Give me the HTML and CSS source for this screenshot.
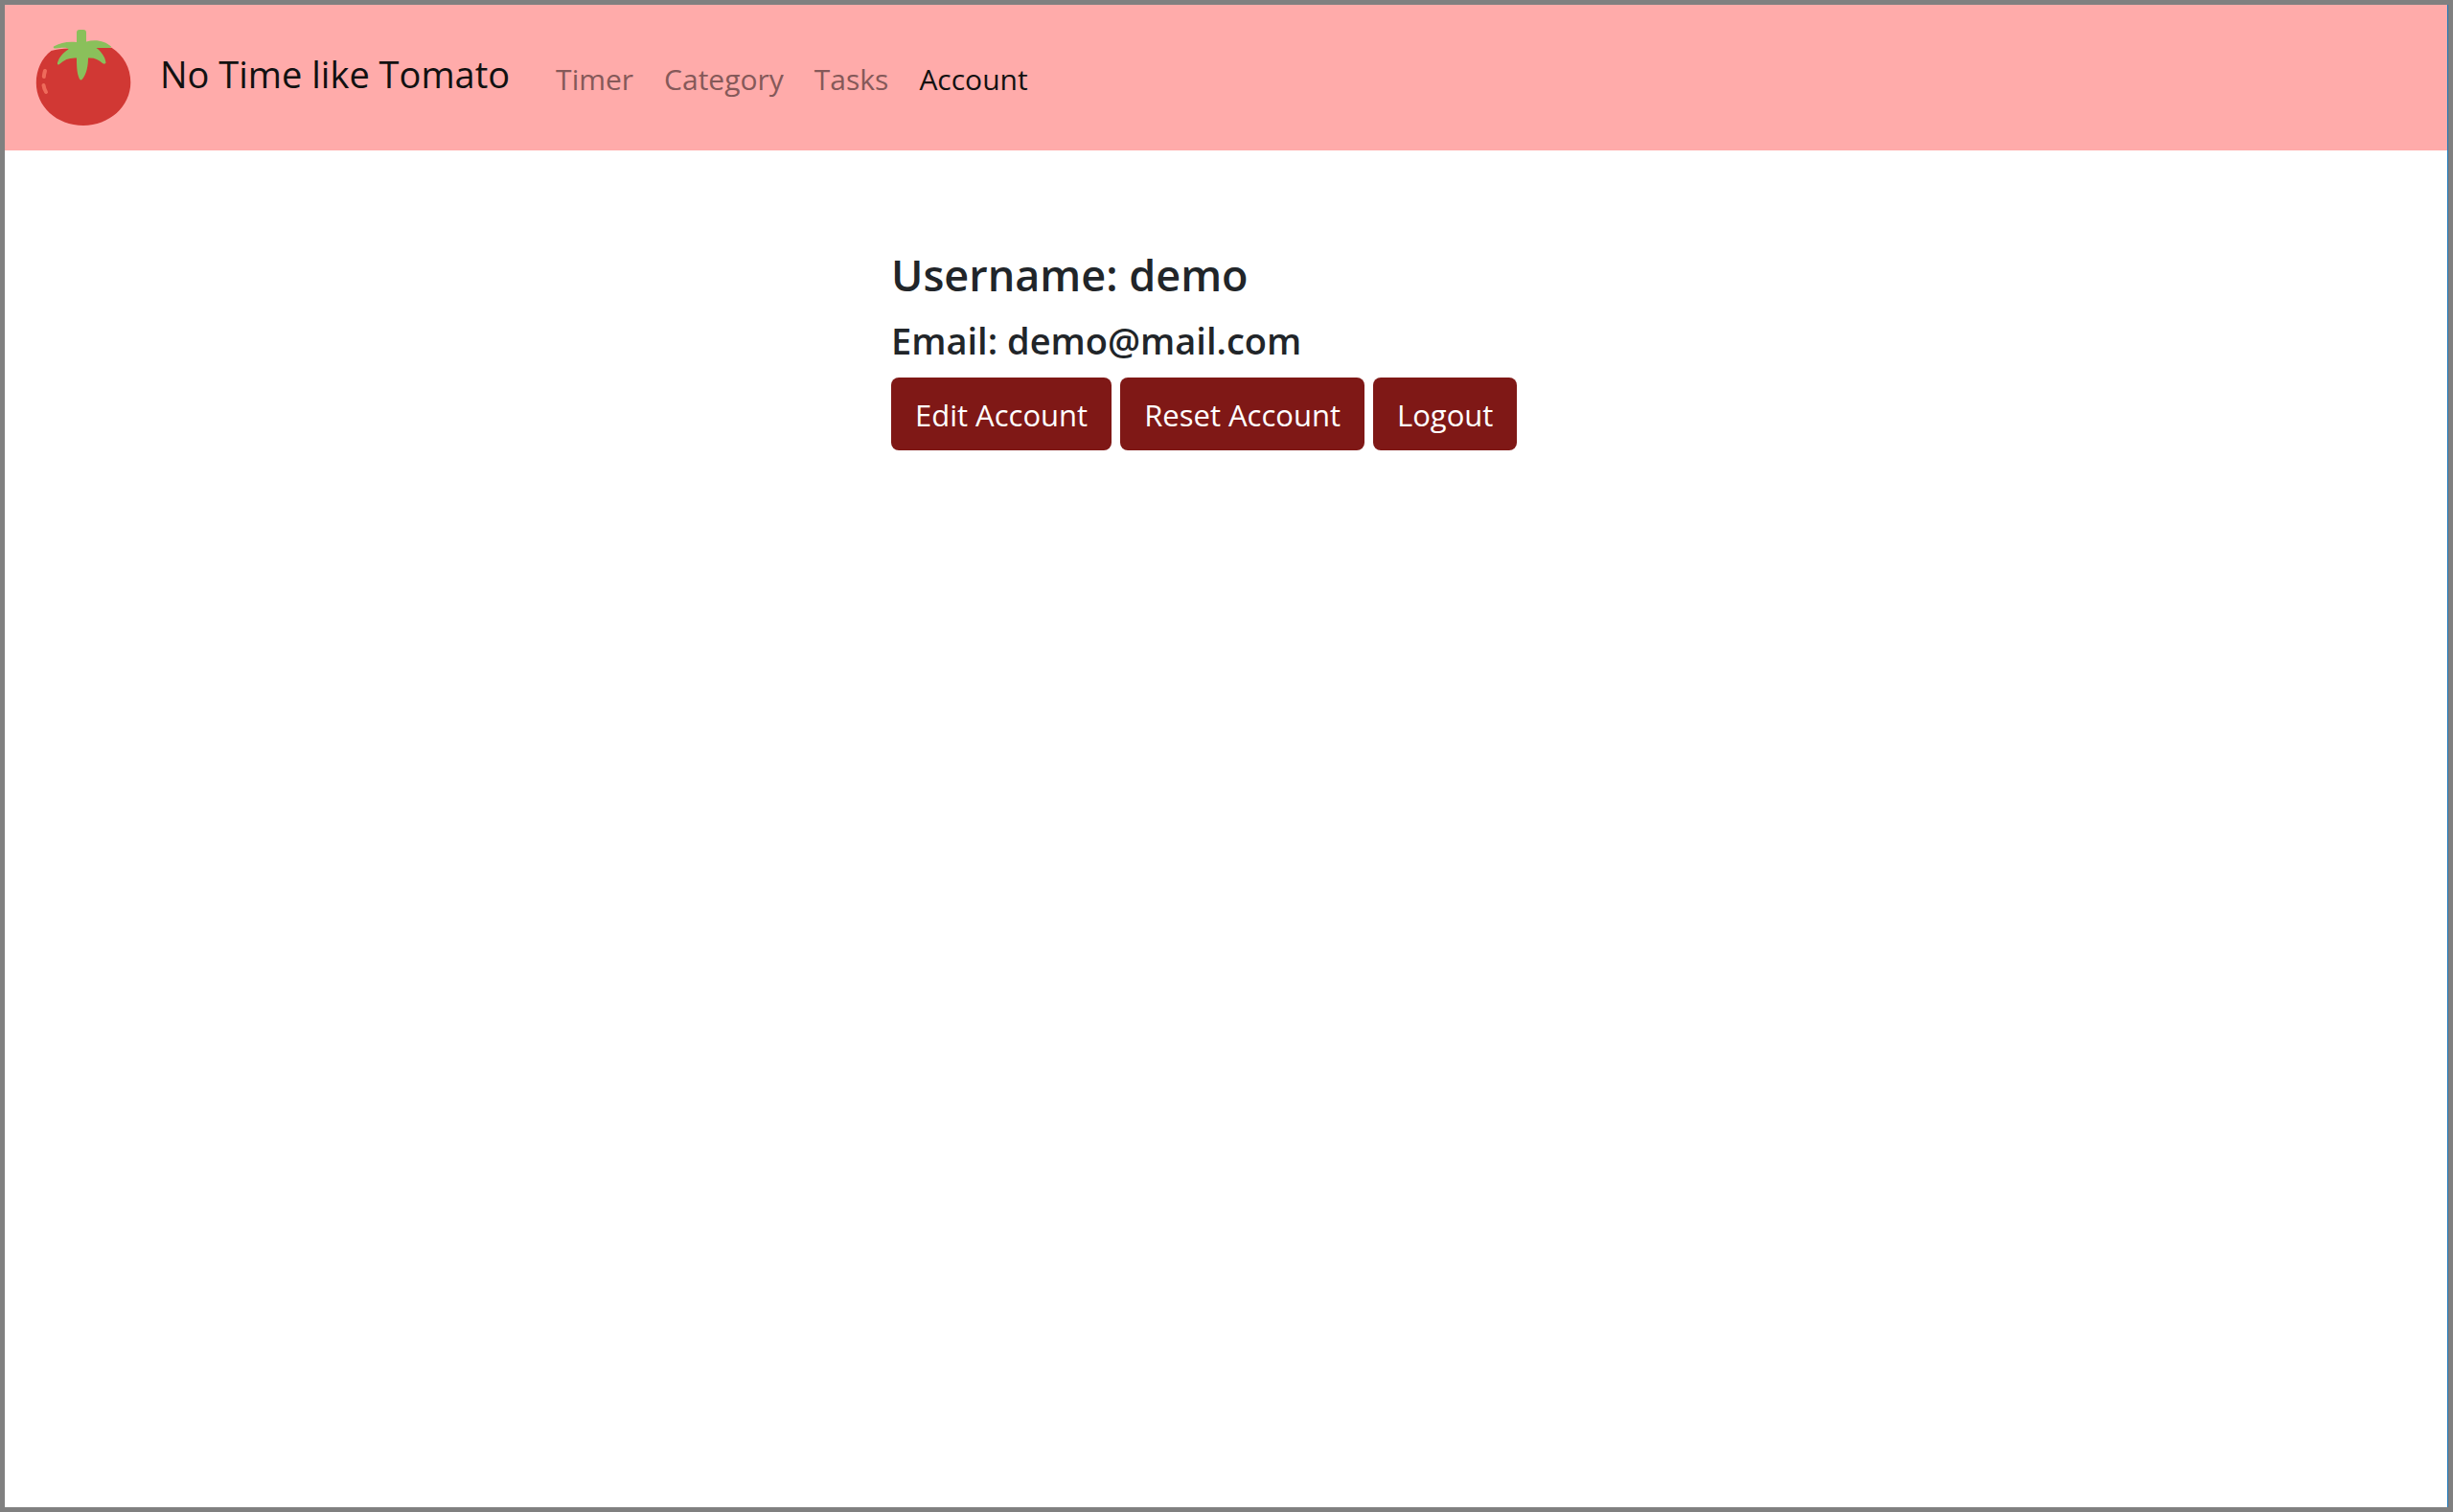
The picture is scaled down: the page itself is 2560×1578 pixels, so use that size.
FILE: index.html
```html
<!DOCTYPE html>
<html lang="en">
<head>
<meta charset="utf-8">
<meta name="viewport" content="width=device-width, initial-scale=1">
<title>No Time like Tomato</title>
<link rel="stylesheet" href="styles.css">
</head>
<body>
<div class="frame">
  <header class="navbar">
    <a class="brand" href="#">
      <svg class="brand-logo" viewBox="0 0 100 100" aria-hidden="true">
        <path fill="#d13834" d="M50 100C22 100 .8 80 .8 55.500C.8 42 6.500 29.500 16.500 22C22 20.300 28 20 35 19.500L50 16L64 19L79.500 18.800C92 27 99.300 40 99.300 55C99.300 80 77 100 50 100Z"/>
        <path fill="#8ac05b" d="M43 3Q43 0 46 0H50Q53 0 53 3V12.500C63 9.500 73 12 79 17.500Q79 19 77 19H63.500C69 23 73 29 73.500 34.500Q72.500 36.500 70 35C66 31 61 29 55 29.500C55 38 53 47 49 51.500Q47.500 53.500 46 51.500C43 45 43 37 43 29.500C36 29 30 31 25 36Q22.500 37.500 23 34.500C25 28 29 24 34.500 20.500C34 18.500 29 18.500 21 19.500Q18 19.500 19 17.500C26 13 35 12 43 13Z"/>
        <path fill="none" stroke="#ee6b5b" stroke-width="4" stroke-linecap="round" d="M10 43Q9 46 8.800 49M8.500 58Q9 62 11 65"/>
      </svg>
      <span class="brand-name">No Time like Tomato</span>
    </a>
    <nav class="nav" aria-label="Main">
      <a class="nav-link" href="#">Timer</a>
      <a class="nav-link" href="#">Category</a>
      <a class="nav-link" href="#">Tasks</a>
      <a class="nav-link active" href="#" aria-current="page">Account</a>
    </nav>
  </header>
  <main class="account">
    <h1 class="username">Username: demo</h1>
    <h2 class="email">Email: demo@mail.com</h2>
    <div class="actions">
      <button class="btn" type="button">Edit Account</button>
      <button class="btn" type="button">Reset Account</button>
      <button class="btn" type="button">Logout</button>
    </div>
  </main>
</div>
</body>
</html>
```
FILE: styles.css
```css
* {
  box-sizing: border-box;
}

body {
  margin: 0;
  background: #fff;
  color: #212529;
  font-family: "Open Sans", "Noto Sans", sans-serif;
  font-size: 30px;
  line-height: 48px;
}

.frame {
  min-height: 100vh;
  border: 5px solid #808080;
  box-shadow: inset -1px 0 #1674b8;
}

.navbar {
  display: flex;
  align-items: center;
  gap: 32px;
  margin-right: 1px;
  padding: 26px 32px;
  background: #ffabaa;
}

.brand {
  display: flex;
  align-items: center;
  gap: 30px;
  color: #111;
  font-size: 38px;
  text-decoration: none;
}

.brand-logo {
  width: 100px;
  height: 100px;
}

.brand-name {
  padding-bottom: 8px;
}

.nav {
  display: flex;
  padding-top: 4px;
}

.nav-link {
  padding: 0 16px;
  color: #855959;
  text-decoration: none;
}

.nav-link.active {
  color: #111;
}

.account {
  max-width: 760px;
  margin: 0 auto;
  padding: 101px 30px;
}

.username,
.email {
  margin: 0 0 16px;
  font-weight: 600;
}

.username {
  font-size: 45px;
  line-height: 58px;
}

.email {
  font-size: 38px;
  line-height: 46px;
}

.actions {
  display: flex;
  gap: 9px;
}

.btn {
  padding: 15px 25px 13px;
  border: 0;
  border-radius: 8px;
  background: #7f1816;
  color: #fff;
  font: inherit;
  font-size: 31px;
  white-space: nowrap;
}
```
